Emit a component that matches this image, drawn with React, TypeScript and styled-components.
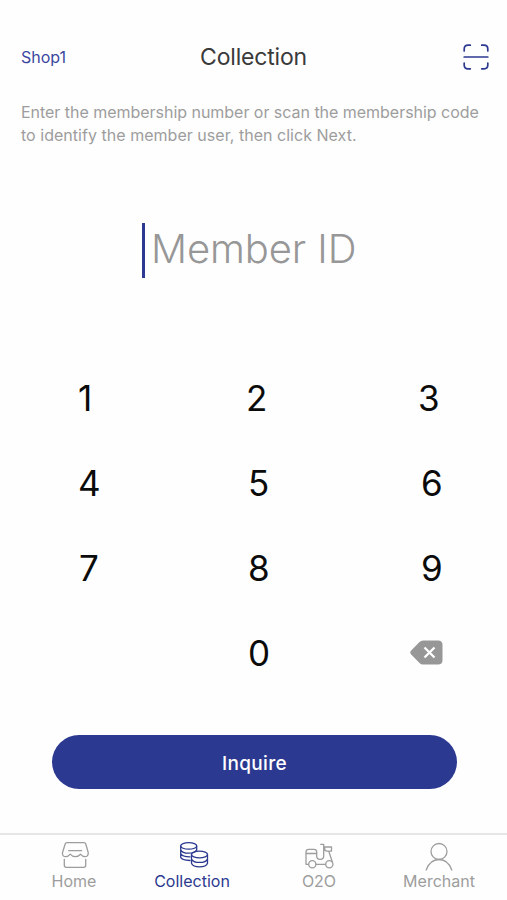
import React from "react";
import styled, { createGlobalStyle } from "styled-components";

const blue = "#2b3990";
const grey = "#9d9d9d";

const GlobalStyle = createGlobalStyle`
  * { box-sizing: border-box; }
  body { margin: 0; background: #fff; font-family: Inter, "Liberation Sans", sans-serif; }
  button { font: inherit; border: 0; padding: 0; background: none; cursor: pointer; }
  svg { display: block; }
`;

const Screen = styled.main`
  width: 507px;
  height: 900px;
  display: flex;
  flex-direction: column;
  background: #fefefe;
  overflow: hidden;
`;

const Header = styled.header`
  display: grid;
  grid-template-columns: 1fr auto 1fr;
  align-items: center;
  height: 32px;
  margin-top: 41px;
  padding: 0 18px 0 20px;
`;

const Shop = styled.button`
  justify-self: start;
  margin-left: 1px;
  color: #3c479f;
  font-size: 16px;
`;

const Title = styled.h1`
  margin: 0 1px 0 -1px;
  color: #3a3a3a;
  font-size: 23px;
  line-height: 32px;
  font-weight: 400;
  letter-spacing: -0.2px;
`;

const ScanButton = styled.button`
  justify-self: end;
`;

const Hint = styled.p`
  margin: 28px 0 0 21px;
  height: 46px;
  color: ${grey};
  font-size: 16px;
  line-height: 23px;
  white-space: nowrap;
`;

const HintLine = styled.span<{ $spacing: number }>`
  display: block;
  letter-spacing: ${(p) => p.$spacing}px;
`;

const Field = styled.div`
  display: flex;
  align-items: center;
  height: 55px;
  margin: 76px 0 0 142px;
`;

const Caret = styled.span`
  width: 3px;
  height: 55px;
  background: ${blue};
`;

const Placeholder = styled.span`
  margin: -4px 0 0 6px;
  color: #979797;
  font-size: 40px;
  line-height: 50px;
  font-weight: 350;
  letter-spacing: -0.1px;
  white-space: nowrap;
`;

const Keypad = styled.div`
  display: grid;
  grid-template-columns: 169px 172px 1fr;
  grid-auto-rows: 85px;
  margin: 77px 0 0 77px;
`;

const Key = styled.button<{ $shift?: number }>`
  display: flex;
  align-items: center;
  margin-left: ${(p) => p.$shift ?? 0}px;
  color: #0b0b0b;
  font-size: 35px;
  line-height: 40px;
  font-weight: 370;
`;

const Inquire = styled.button`
  flex: none;
  width: 405px;
  height: 54px;
  margin: 40px 0 0 52px;
  padding-top: 2px;
  border-radius: 27px;
  background: ${blue};
  color: #fff;
  font-size: 19px;
  font-weight: 500;
  letter-spacing: 0.3px;
`;

const TabBar = styled.nav`
  display: grid;
  grid-template-columns: 118px 118px 136px 104px;
  height: 67px;
  margin-top: auto;
  padding: 6px 0 0 15px;
  border-top: 2px solid #e6e6e6;
`;

const Tab = styled.button<{ $active?: boolean }>`
  display: flex;
  flex-direction: column;
  align-items: center;
  color: ${(p) => (p.$active ? blue : grey)};
  font-size: 16px;
  line-height: 20px;
`;

const TabIcon = styled.svg<{ $nudge?: number }>`
  width: 30px;
  height: 28px;
  margin: 0 0 2px ${(p) => p.$nudge ?? 0}px;
  overflow: visible;
  fill: none;
  stroke: currentColor;
  stroke-width: 1.3;
  stroke-linecap: round;
  stroke-linejoin: round;
`;

const keys = [
  { label: "1", shift: 1 }, { label: "2" }, { label: "3" },
  { label: "4", shift: 1 }, { label: "5", shift: 2 }, { label: "6", shift: 3 },
  { label: "7", shift: 2 }, { label: "8", shift: 2 }, { label: "9", shift: 3 },
];

export default function App() {
  return (
    <Screen>
      <GlobalStyle />
      <Header>
        <Shop>Shop1</Shop>
        <Title>Collection</Title>
        <ScanButton aria-label="Scan">
          <svg width="26" height="26" viewBox="0 0 26 26" fill="none" stroke={blue} strokeWidth="1.7" strokeLinecap="round">
            <path d="M1.2 7V5Q1.2 1.2 5 1.2H7.3M18.7 1.2H21Q24.8 1.2 24.8 5V7M24.8 19V21Q24.8 24.8 21 24.8H18.7M7.3 24.8H5Q1.2 24.8 1.2 21V19M1.2 13H24.8" />
          </svg>
        </ScanButton>
      </Header>
      <Hint>
        <HintLine $spacing={-0.03}>Enter the membership number or scan the membership code</HintLine>
        <HintLine $spacing={0.03}>to identify the member user, then click Next.</HintLine>
      </Hint>
      <Field>
        <Caret />
        <Placeholder>Member ID</Placeholder>
      </Field>
      <Keypad>
        {keys.map((k) => <Key key={k.label} $shift={k.shift}>{k.label}</Key>)}
        <span />
        <Key $shift={2}>0</Key>
        <Key aria-label="Delete" $shift={-8}>
          <svg width="33" height="25" viewBox="0 0 33 25">
            <path d="M13 0.5H28Q32.5 0.5 32.5 5V20Q32.5 24.5 28 24.5H13Q11 24.5 9.5 23L1.2 14.5Q-0.6 12.5 1.2 10.5L9.5 2Q11 0.5 13 0.5Z" fill="#979797" />
            <path d="M14.5 7.5L24.5 17.5M24.5 7.5L14.5 17.5" stroke="#fff" strokeWidth="2.3" />
          </svg>
        </Key>
      </Keypad>
      <Inquire>Inquire</Inquire>
      <TabBar>
        <Tab>
          <TabIcon viewBox="0 0 30 28" $nudge={2}>
            <path d="M7 1.7H24Q25.4 1.7 25.8 3L28.2 11.5C28.6 14 27 15.7 25 15.7Q22.5 15.7 20.5 13.2Q18.3 15.7 15.3 15.7Q12.3 15.7 10.2 13.2Q8.3 15.7 5.8 15.7C3.5 15.7 2 14 2.5 11.5L5.2 3Q5.6 1.7 7 1.7ZM8.7 9.7H21.7M4.3 18.3V24.3Q4.3 26.3 6.3 26.3H23.7Q25.7 26.3 25.7 24.3V18.3" />
          </TabIcon>
          Home
        </Tab>
        <Tab $active>
          <TabIcon viewBox="0 0 30 28" $nudge={4}>
            <ellipse cx="9.7" cy="4.9" rx="8" ry="3.3" />
            <path d="M1.7 4.9V16.2Q2.5 19 11 19.5M17.7 4.9V9.2M1.7 8.7Q3 12.2 9.7 12.2Q15.8 12.2 17.5 9M1.7 12.5Q3 15.9 11 15.9" />
            <ellipse cx="20.5" cy="13.5" rx="8" ry="3.3" />
            <path d="M12.5 13.5V22.2Q13.8 25.9 20.5 25.9Q27.2 25.9 28.5 22.2V13.5M12.5 17.9Q13.8 21.4 20.5 21.4Q27.2 21.4 28.5 17.9" />
          </TabIcon>
          Collection
        </Tab>
        <Tab>
          <TabIcon viewBox="0 0 30 28">
            <path d="M4.5 23.3H2V11Q2 8.3 4.8 8.3H10Q12.7 8.3 12.7 11V15Q12.7 18.3 16.2 18.3Q19.7 18.3 19.7 15V3.3H16.7M2 12.5H12.7M12 23.3H21.5M20.7 6H27.5V10.2H23Q20.7 10 20.7 8V6M24.8 10.3L28.3 21" />
            <circle cx="8.3" cy="23.3" r="3.6" />
            <circle cx="25.3" cy="23.3" r="3.6" />
          </TabIcon>
          O2O
        </Tab>
        <Tab>
          <TabIcon viewBox="0 0 30 28">
            <circle cx="15" cy="10.5" r="8" />
            <path d="M2.2 29C4.5 22.5 9 18.5 15 18.5S25.5 22.5 27.8 29" />
          </TabIcon>
          Merchant
        </Tab>
      </TabBar>
    </Screen>
  );
}
